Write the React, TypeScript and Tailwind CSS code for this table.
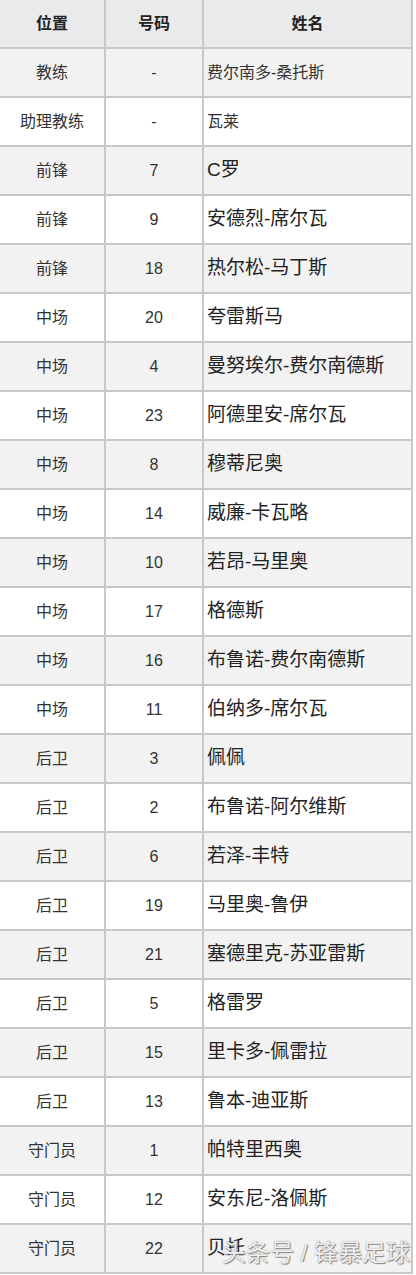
const rows: [string, string, string][] = [
  ['教练', '-', '费尔南多-桑托斯'],
  ['助理教练', '-', '瓦莱'],
  ['前锋', '7', 'C罗'],
  ['前锋', '9', '安德烈-席尔瓦'],
  ['前锋', '18', '热尔松-马丁斯'],
  ['中场', '20', '夸雷斯马'],
  ['中场', '4', '曼努埃尔-费尔南德斯'],
  ['中场', '23', '阿德里安-席尔瓦'],
  ['中场', '8', '穆蒂尼奥'],
  ['中场', '14', '威廉-卡瓦略'],
  ['中场', '10', '若昂-马里奥'],
  ['中场', '17', '格德斯'],
  ['中场', '16', '布鲁诺-费尔南德斯'],
  ['中场', '11', '伯纳多-席尔瓦'],
  ['后卫', '3', '佩佩'],
  ['后卫', '2', '布鲁诺-阿尔维斯'],
  ['后卫', '6', '若泽-丰特'],
  ['后卫', '19', '马里奥-鲁伊'],
  ['后卫', '21', '塞德里克-苏亚雷斯'],
  ['后卫', '5', '格雷罗'],
  ['后卫', '15', '里卡多-佩雷拉'],
  ['后卫', '13', '鲁本-迪亚斯'],
  ['守门员', '1', '帕特里西奥'],
  ['守门员', '12', '安东尼-洛佩斯'],
  ['守门员', '22', '贝托'],
]

const cjk = "font-['Liberation_Sans','Noto_Sans_CJK_SC',sans-serif]"

export default function App() {
  return (
    <div className={`relative w-[416px] bg-white ${cjk}`}>
      <div className="w-[413px]">
        <div className="grid h-[49px] grid-cols-[106px_98px_1fr] border-b-2 border-[#c8c8c8] bg-[#e9eaec] text-[16px] font-bold text-[#222]">
          <div className="flex items-center justify-center border-r-2 border-[#c8c8c8]">位置</div>
          <div className="flex items-center justify-center border-r-2 border-[#c8c8c8]">号码</div>
          <div className="flex items-center justify-center border-r-2 border-[#c8c8c8]">姓名</div>
        </div>
        {rows.map(([pos, num, name], i) => (
          <div
            key={i}
            className={`grid h-[49px] grid-cols-[106px_98px_1fr] border-b-2 border-[#c8c8c8] text-[16px] text-[#333] ${
              i % 2 === 0 ? 'bg-[#f2f2f2]' : 'bg-white'
            }`}
          >
            <div className="flex items-center justify-center border-r-2 border-[#c8c8c8]">{pos}</div>
            <div className="flex items-center justify-center border-r-2 border-[#c8c8c8]">{num}</div>
            <div
              className={`flex items-center border-r-2 border-[#c8c8c8] pl-[3px] ${
                i < 2 ? 'text-[16px]' : 'text-[19px] text-[#222]'
              }`}
            >
              {name}
            </div>
          </div>
        ))}
      </div>
      <div className="absolute left-[222px] top-[1241px] text-[24px] leading-none text-white/90 [text-shadow:0_0_1px_#666,1px_1px_1px_#888]">
        头条号 / 锋暴足球
      </div>
    </div>
  )
}
